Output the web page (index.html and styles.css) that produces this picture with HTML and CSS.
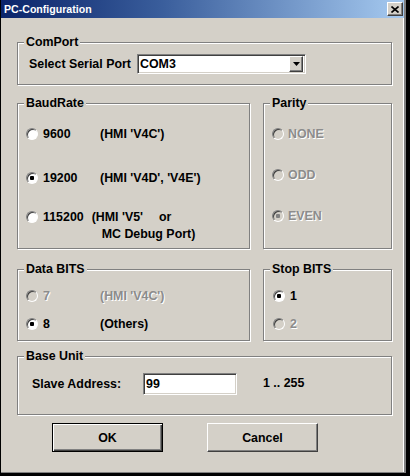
FILE: index.html
```html
<!DOCTYPE html>
<html>
<head>
<meta charset="utf-8">
<title>PC-Configuration</title>
<link rel="stylesheet" href="styles.css">
</head>
<body>
<div class="window">
  <div class="titlebar">
    <span class="title">PC-Configuration</span>
    <span class="close-btn"><svg width="8" height="7" viewBox="0 0 8 7"><path d="M0.5 0.5 L7.5 6.5 M7.5 0.5 L0.5 6.5" stroke="#000" stroke-width="1.6" fill="none"/></svg></span>
  </div>
  <div class="content">
    <div class="group comport">
      <div class="group-title">ComPort</div>
      <div class="port-row">
        <span class="port-label">Select Serial Port</span>
        <div class="combo">
          <span class="combo-text">COM3</span>
          <span class="combo-btn"><svg width="7" height="4" viewBox="0 0 7 4"><path d="M0 0 H7 L3.5 4 Z" fill="#000"/></svg></span>
        </div>
      </div>
    </div>

    <div class="cols cols-top">
      <div class="group col-left baud">
        <div class="group-title">BaudRate</div>
        <div class="opts opts-baud">
          <label class="opt"><input type="radio" name="baud" class="radio"><span class="val">9600</span><span class="desc">(HMI 'V4C')</span></label>
          <label class="opt"><input type="radio" name="baud" class="radio" checked><span class="val">19200</span><span class="desc">(HMI 'V4D', 'V4E')</span></label>
          <label class="opt"><input type="radio" name="baud" class="radio"><span class="val val-auto">115200</span><span class="desc desc-multi"><span class="line">(HMI 'V5'<span class="or">or</span></span><span class="line line-2">MC Debug Port)</span></span></label>
        </div>
      </div>
      <div class="group col-right parity">
        <div class="group-title">Parity</div>
        <div class="opts opts-parity">
          <label class="opt disabled"><input type="radio" name="parity" class="radio" disabled><span>NONE</span></label>
          <label class="opt disabled"><input type="radio" name="parity" class="radio" disabled><span>ODD</span></label>
          <label class="opt disabled"><input type="radio" name="parity" class="radio" disabled checked><span>EVEN</span></label>
        </div>
      </div>
    </div>

    <div class="cols cols-bits">
      <div class="group col-left bits">
        <div class="group-title">Data BITS</div>
        <div class="opts opts-bits">
          <label class="opt disabled"><input type="radio" name="data" class="radio" disabled><span class="val">7</span><span class="desc">(HMI 'V4C')</span></label>
          <label class="opt"><input type="radio" name="data" class="radio" checked><span class="val">8</span><span class="desc">(Others)</span></label>
        </div>
      </div>
      <div class="group col-right bits stop">
        <div class="group-title">Stop BITS</div>
        <div class="opts opts-bits">
          <label class="opt"><input type="radio" name="stop" class="radio" checked><span>1</span></label>
          <label class="opt disabled"><input type="radio" name="stop" class="radio" disabled><span>2</span></label>
        </div>
      </div>
    </div>

    <div class="group base">
      <div class="group-title">Base Unit</div>
      <div class="addr-row">
        <span class="addr-label">Slave Address:</span>
        <input class="addr-input" type="text" value="99">
        <span class="addr-range">1 .. 255</span>
      </div>
    </div>

    <div class="buttons">
      <button class="btn btn-default">OK</button>
      <button class="btn">Cancel</button>
    </div>
  </div>
</div>
</body>
</html>
```
FILE: styles.css
```css
html, body {
  margin: 0;
  padding: 0;
}
body {
  width: 410px;
  height: 476px;
  overflow: hidden;
  background: #000;
  font-family: "Liberation Sans", Arial, sans-serif;
  font-weight: bold;
  font-size: 12.4px;
  color: #000;
}
.window {
  margin-left: 1px;
  width: 405px;
  height: 473px;
  box-sizing: border-box;
  background: #d4d0c8;
  border-right: 2px solid #808080;
  border-bottom: 1px solid #808080;
  box-shadow: inset -1px 0 0 #ffffff;
}
.titlebar {
  height: 18px;
  display: flex;
  align-items: center;
  justify-content: space-between;
  padding: 0 1px 0 3px;
  background: linear-gradient(90deg, #0a246a 0%, #3a5e9c 40%, #a6caf0 100%);
}
.title {
  color: #fff;
  font-size: 10.6px;
  line-height: 18px;
}
.close-btn {
  width: 16px;
  height: 14px;
  box-sizing: border-box;
  background: #d4d0c8;
  border: 1px solid;
  border-color: #fff #404040 #404040 #fff;
  box-shadow: inset -1px -1px 0 #808080;
  display: flex;
  align-items: center;
  justify-content: center;
}
.content {
  padding: 24px 0 0 16px;
}
.group {
  box-sizing: border-box;
  border: 1px solid #808080;
  box-shadow: inset 1px 1px 0 #fff, 1px 1px 0 #fff;
}
.group-title {
  width: fit-content;
  margin: -8px 0 0 6px;
  padding: 0 2px;
  background: #d4d0c8;
  line-height: 14px;
  height: 14px;
}
.comport {
  width: 375px;
  height: 43px;
}
.port-row {
  display: flex;
  align-items: center;
  margin-top: 5px;
  padding-left: 11px;
}
.port-label {
  width: 108px;
}
.combo {
  width: 169px;
  height: 20px;
  box-sizing: border-box;
  background: #fff;
  border: 1px solid;
  border-color: #808080 #fff #fff #808080;
  box-shadow: inset 1px 1px 0 #404040, inset -1px -1px 0 #d4d0c8;
  display: flex;
  align-items: center;
  justify-content: space-between;
  padding: 1px 2px 1px 2px;
}
.combo-text {
  line-height: 16px;
}
.combo-btn {
  width: 14px;
  height: 16px;
  box-sizing: border-box;
  background: #d4d0c8;
  border: 1px solid;
  border-color: #fff #404040 #404040 #fff;
  box-shadow: inset -1px -1px 0 #808080;
  display: flex;
  align-items: center;
  justify-content: center;
}
.cols {
  display: flex;
  gap: 13px;
  width: 375px;
}
.cols-top {
  margin-top: 18px;
}
.cols-bits {
  margin-top: 20px;
}
.col-left {
  width: 233px;
}
.col-right {
  width: 129px;
}
.baud, .parity {
  height: 146px;
}
.bits {
  height: 72px;
}
.opts {
  display: grid;
  padding-left: 8px;
}
.opts-baud {
  margin-top: 16px;
  grid-template-rows: 44px 39px auto;
}
.opts-parity {
  margin-top: 16px;
  grid-template-rows: 41px 41px auto;
}
.opts-bits {
  margin-top: 12px;
  grid-template-rows: 28px auto;
}
.stop .opts {
  padding-left: 9px;
}
.opt {
  display: flex;
  align-items: flex-start;
  line-height: 16px;
}
.radio {
  appearance: none;
  -webkit-appearance: none;
  width: 12px;
  height: 12px;
  margin: 2px 5px 0 0;
  flex: none;
  box-sizing: border-box;
  border-radius: 50%;
  border: 1px solid;
  border-color: #808080 #fff #fff #808080;
  background: #fff;
  box-shadow: inset 1px 1px 0 #404040;
}
.radio:checked {
  background: radial-gradient(circle, #000 0 2px, #fff 2.5px);
}
.radio:disabled {
  background: #d4d0c8;
}
.radio:disabled:checked {
  background: radial-gradient(circle, #808080 0 2px, #d4d0c8 2.5px);
}
.parity .opt .radio {
  margin-right: 4px;
}
.val {
  width: 57px;
  flex: none;
}
.val-auto {
  width: auto;
  margin-right: 8px;
}
.desc-multi {
  display: flex;
  flex-direction: column;
  line-height: 17px;
  margin-top: -0.5px;
}
.line-2 {
  padding-left: 10px;
}
.or {
  margin-left: 16px;
}
.disabled {
  color: #8c8c8c;
  text-shadow: 1px 1px 0 #fff;
}
.base {
  width: 375px;
  height: 59px;
  margin-top: 15px;
}
.addr-row {
  display: flex;
  align-items: center;
  margin-top: 10px;
  padding-left: 14px;
}
.addr-label {
  width: 111px;
}
.addr-input {
  width: 94px;
  height: 22px;
  box-sizing: border-box;
  margin: 0;
  padding: 0 0 0 2px;
  font: inherit;
  color: #000;
  background: #fff;
  border: 1px solid;
  border-color: #808080 #fff #fff #808080;
  box-shadow: inset 1px 1px 0 #404040, inset -1px -1px 0 #d4d0c8;
  outline: none;
}
.addr-range {
  margin-left: 26px;
  margin-top: -2px;
}
.buttons {
  display: flex;
  gap: 44px;
  margin-top: 8px;
  padding-left: 35px;
}
.btn {
  width: 111px;
  height: 29px;
  box-sizing: border-box;
  margin: 0;
  padding: 0;
  font: inherit;
  color: #000;
  background: #d4d0c8;
  border: 1px solid;
  border-color: #fff #404040 #404040 #fff;
  box-shadow: inset -1px -1px 0 #808080;
}
.btn-default {
  border: 1px solid #000;
  box-shadow: inset 1px 1px 0 #fff, inset -1px -1px 0 #404040, inset -2px -2px 0 #808080;
}
```
